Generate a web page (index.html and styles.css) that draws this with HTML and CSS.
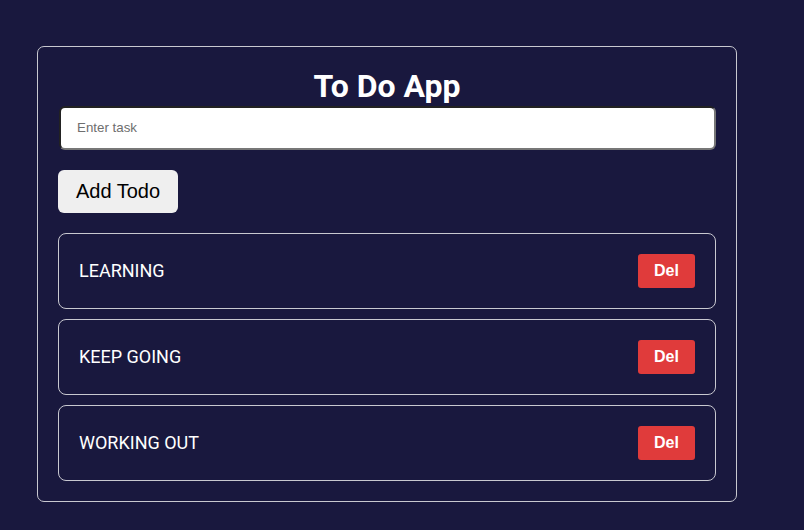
FILE: index.html
```html
<!DOCTYPE html>
<html>
<head>
<meta charset="utf-8">
<link rel="stylesheet" href="styles.css">
</head>
<body>
<div class="card">
  <h1 class="title">To Do App</h1>
  <input class="task-input" type="text" placeholder="Enter task">
  <button class="add-btn">Add Todo</button>
  <ul class="list">
    <li class="item"><span class="item-text">LEARNING</span><button class="del-btn">Del</button></li>
    <li class="item"><span class="item-text">KEEP GOING</span><button class="del-btn">Del</button></li>
    <li class="item"><span class="item-text">WORKING OUT</span><button class="del-btn">Del</button></li>
  </ul>
</div>
</body>
</html>
```
FILE: styles.css
```css
html, body {
  margin: 0;
  padding: 0;
  background: #19183e;
}
body {
  padding: 46px 0 0 37px;
  font-family: Roboto, "Liberation Sans", sans-serif;
  color: #fff;
}
.card {
  box-sizing: border-box;
  width: 700px;
  border: 1px solid #c8c8d0;
  border-radius: 7px;
  padding: 20px 20px 20px 20px;
  display: flex;
  flex-direction: column;
}
.title {
  margin: 0 0 1px 0;
  font-size: 32px;
  font-weight: 700;
  text-align: center;
  line-height: 38px;
}
.task-input {
  box-sizing: border-box;
  width: 657px;
  height: 44px;
  margin: 0 0 20px 1px;
  border-style: solid;
  border-width: 2px;
  border-color: #222 #777 #777 #222;
  border-radius: 6px;
  padding: 0 0 1px 16px;
  font-family: "Liberation Sans", Arial, sans-serif;
  font-size: 13.33px;
  background: #fff;
  outline: none;
}
.task-input::placeholder {
  color: #6e6e6e;
}
.add-btn {
  align-self: flex-start;
  width: 120px;
  height: 43px;
  border: none;
  border-radius: 6px;
  background: #efefef;
  color: #000;
  font-family: "Liberation Sans", Arial, sans-serif;
  font-size: 20px;
  padding: 0;
  margin-bottom: 20px;
}
.list {
  list-style: none;
  margin: 0;
  padding: 0;
  display: flex;
  flex-direction: column;
  gap: 10px;
}
.item {
  box-sizing: border-box;
  height: 76px;
  border: 1px solid #c8c8d0;
  border-radius: 8px;
  padding: 0 20px;
  display: flex;
  align-items: center;
  justify-content: space-between;
}
.item-text {
  font-size: 18px;
  color: #fff;
  margin-bottom: 1px;
}
.del-btn {
  width: 57px;
  height: 34px;
  border: none;
  border-radius: 3px;
  background: #e03b3b;
  color: #fff;
  font-family: "Liberation Sans", Arial, sans-serif;
  font-weight: 700;
  font-size: 16px;
  padding: 0;
}
```
